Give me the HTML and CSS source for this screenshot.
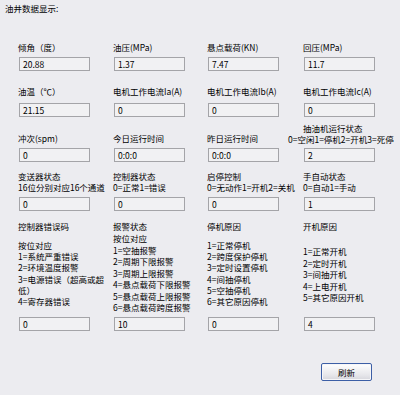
FILE: index.html
```html
<!DOCTYPE html>
<html lang="zh-CN">

<head>
    <meta charset="UTF-8">
    <meta name="viewport" content="width=device-width, initial-scale=1.0">
    <title>油井数据显示</title>
    <link rel="stylesheet" href="styles.css">
</head>

<body>
    <div class="form">
        <div class="title">油井数据显示:</div>

        <!-- 第一行 -->
        <div class="row r1">
            <div class="cell"><div class="lbl">倾角（度）</div><div class="box">20.88</div></div>
            <div class="cell"><div class="lbl">油压(MPa)</div><div class="box">1.37</div></div>
            <div class="cell"><div class="lbl">悬点载荷(KN)</div><div class="box">7.47</div></div>
            <div class="cell"><div class="lbl">回压(MPa)</div><div class="box">11.7</div></div>
        </div>

        <!-- 第二行 -->
        <div class="row r2">
            <div class="cell"><div class="lbl">油温（℃）</div><div class="box">21.15</div></div>
            <div class="cell"><div class="lbl">电机工作电流Ia(A)</div><div class="box">0</div></div>
            <div class="cell"><div class="lbl">电机工作电流Ib(A)</div><div class="box">0</div></div>
            <div class="cell"><div class="lbl">电机工作电流Ic(A)</div><div class="box">0</div></div>
        </div>

        <!-- 第三行 -->
        <div class="row r3">
            <div class="cell"><div class="lbl low">冲次(spm)</div><div class="box">0</div></div>
            <div class="cell"><div class="lbl low">今日运行时间</div><div class="box">0:0:0</div></div>
            <div class="cell"><div class="lbl low">昨日运行时间</div><div class="box">0:0:0</div></div>
            <div class="cell">
                <div class="lbl">抽油机运行状态</div>
                <div class="lbl shift">0=空闲1=停机2=开机3=死停</div>
                <div class="box">2</div>
            </div>
        </div>

        <!-- 第四行 -->
        <div class="row r4">
            <div class="cell"><div class="lbl">变送器状态</div><div class="lbl">16位分别对应16个通道</div><div class="box">0</div></div>
            <div class="cell"><div class="lbl">控制器状态</div><div class="lbl">0=正常1=错误</div><div class="box">0</div></div>
            <div class="cell"><div class="lbl">启停控制</div><div class="lbl">0=无动作1=开机2=关机</div><div class="box">0</div></div>
            <div class="cell"><div class="lbl">手自动状态</div><div class="lbl">0=自动1=手动</div><div class="box">1</div></div>
        </div>

        <!-- 第五行 -->
        <div class="row r5">
            <div class="cell">
                <div class="lbl">控制器错误码</div>
                <div class="desc d1">
                    <div>按位对应</div>
                    <div>1=系统严重错误</div>
                    <div>2=环境温度报警</div>
                    <div>3=电源错误（超高或超</div>
                    <div>低）</div>
                    <div>4=寄存器错误</div>
                </div>
                <div class="box">0</div>
            </div>
            <div class="cell">
                <div class="lbl">报警状态</div>
                <div class="desc d2">
                    <div>按位对应</div>
                    <div>1=空抽报警</div>
                    <div>2=周期下限报警</div>
                    <div>3=周期上限报警</div>
                    <div>4=悬点载荷下限报警</div>
                    <div>5=悬点载荷上限报警</div>
                    <div>6=悬点载荷跨度报警</div>
                </div>
                <div class="box">10</div>
            </div>
            <div class="cell">
                <div class="lbl">停机原因</div>
                <div class="desc d3">
                    <div>1=正常停机</div>
                    <div>2=跨度保护停机</div>
                    <div>3=定时设置停机</div>
                    <div>4=间抽停机</div>
                    <div>5=空抽停机</div>
                    <div>6=其它原因停机</div>
                </div>
                <div class="box">0</div>
            </div>
            <div class="cell">
                <div class="lbl">开机原因</div>
                <div class="desc d4">
                    <div>1=正常开机</div>
                    <div>2=定时开机</div>
                    <div>3=间抽开机</div>
                    <div>4=上电开机</div>
                    <div>5=其它原因开机</div>
                </div>
                <div class="box">4</div>
            </div>
        </div>

        <div class="actions">
            <button class="btn">刷新</button>
        </div>
    </div>
</body>

</html>
```

FILE: styles.css
```css
body {
    margin: 0;
    width: 400px;
    height: 395px;
    overflow: hidden;
    background: #ececf0;
    color: #000;
    font: 8.5px/11px "Noto Sans CJK SC", "DejaVu Sans", sans-serif;
}

.form {
    padding: 3px 0 0 5px;
}

.title {
    height: 11px;
}

/* 四列表格 */
.row {
    display: grid;
    grid-template-columns: 95px 94px 96px 95px;
    padding-left: 13px;
}

.cell {
    display: flex;
    flex-direction: column;
    white-space: nowrap;
}

.lbl {
    height: 11px;
}

.r1 { margin-top: 28px; height: 29px; }
.r2 { margin-top: 15px; height: 31px; }
.r3 { margin-top: 6px;  height: 39px; }
.r4 { margin-top: 9px;  height: 40px; }
.r5 { margin-top: 10px; height: 110px; }

.lbl.low {
    padding-top: 10px;
}

.lbl.shift {
    margin-left: -15px;
}

.desc > div {
    height: 11.2px;
}

.d1 { margin-top: 8px; }
.d2 { margin-top: 1px; }
.d2 > div { height: 11.5px; }
.d3 { margin-top: 8px; }
.d4 { margin-top: 14px; }
.d4 > div { height: 11.5px; }

.box {
    margin-top: auto;
    margin-left: 1px;
    width: 71px;
    height: 14px;
    box-sizing: border-box;
    border: 1px solid #a4a4a8;
    background: #f1f1f3;
    padding-left: 3px;
    line-height: 12px;
}

.actions {
    display: flex;
    justify-content: flex-end;
    margin-top: 32px;
    padding-right: 28px;
}

.btn {
    width: 51px;
    height: 18px;
    padding: 0;
    border: 1px solid #3d5fa6;
    border-radius: 2px;
    background: linear-gradient(#ffffff, #e6e6ea 70%, #d6d6dc);
    box-shadow: inset 0 0 0 1px #f6f6f8;
    color: #000;
    font: 8.5px/14px "Noto Sans CJK SC", sans-serif;
}
```
